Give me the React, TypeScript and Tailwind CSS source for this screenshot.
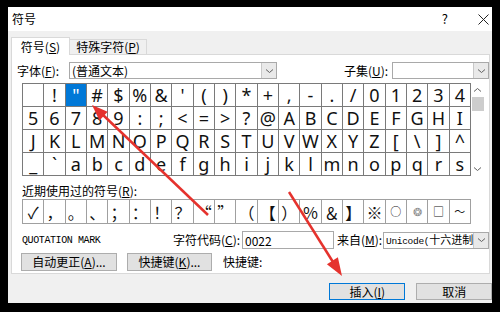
import React from 'react';

const ui = { fontFamily: '"Noto Sans CJK SC", "Noto Sans", sans-serif' };
const glyph = { fontFamily: '"Noto Sans", "Noto Sans CJK SC", sans-serif' };
const mono = { fontFamily: '"Liberation Mono", "Noto Sans CJK SC", monospace' };

const rows = [
  [' ', '!', '"', '#', '$', '%', '&', "'", '(', ')', '*', '+', ',', '-', '.', '/', '0', '1', '2', '3', '4'],
  ['5', '6', '7', '8', '9', ':', ';', '<', '=', '>', '?', '@', 'A', 'B', 'C', 'D', 'E', 'F', 'G', 'H', 'I'],
  ['J', 'K', 'L', 'M', 'N', 'O', 'P', 'Q', 'R', 'S', 'T', 'U', 'V', 'W', 'X', 'Y', 'Z', '[', '\\', ']', '^'],
  ['_', '`', 'a', 'b', 'c', 'd', 'e', 'f', 'g', 'h', 'i', 'j', 'k', 'l', 'm', 'n', 'o', 'p', 'q', 'r', 's'],
];

// 近期使用过的符号，small 表示字形较小
const recent: { c: string; small?: boolean; gray?: boolean }[] = [
  { c: '✓' }, { c: '，' }, { c: '。' }, { c: '、' }, { c: '；' }, { c: '：' }, { c: '！' },
  { c: '？' }, { c: '“' }, { c: '”' }, { c: '（' }, { c: '【' }, { c: '）' }, { c: '％' },
  { c: '＆' }, { c: '】' }, { c: '※' }, { c: '○', small: true }, { c: '❂', small: true, gray: true },
  { c: '□', small: true }, { c: '～', small: true },
];

function Chevron() {
  return (
    <svg width="9" height="6" viewBox="0 0 9 6">
      <path d="M1 1.5 L4.5 4.5 L8 1.5" fill="none" stroke="#606060" strokeWidth="1" />
    </svg>
  );
}

function Combo({ width, children }: { width: string; children?: React.ReactNode }) {
  return (
    <div className={`${width} h-[17px] border border-[#a9a9a9] bg-white flex items-center`}>
      <div className="flex-1 pl-[2px] text-[12px] leading-[15px] whitespace-nowrap overflow-hidden">{children}</div>
      <div className="w-[15px] h-full border-l border-[#c8c8c8] bg-[#e9e9e9] flex items-center justify-center">
        <Chevron />
      </div>
    </div>
  );
}

export default function App() {
  return (
    <div className="relative w-[500px] h-[312px] bg-black pl-[8px] pt-[7px] overflow-hidden" style={ui}>
      <div className="w-[484px] h-[296px] bg-[#f0f0f0] flex flex-col text-black">
        {/* 标题栏 */}
        <div className="h-[24px] bg-white flex items-center pl-[4px] text-[12px]">
          <span>符号</span>
          <span className="ml-auto text-[13px] mr-[30px]">?</span>
          <svg width="11" height="11" viewBox="0 0 11 11" className="mr-[3px]">
            <path d="M0.5 0.5 L10.5 10.5 M10.5 0.5 L0.5 10.5" stroke="#222" strokeWidth="1" />
          </svg>
        </div>

        {/* 选项卡 */}
        <div className="h-[23px] flex items-end pl-[3px]">
          <div className="relative z-10 w-[59px] h-[18px] -mb-px bg-white border border-b-0 border-[#d9d9d9] flex items-center justify-center text-[12px]">
            符号(<u>S</u>)
          </div>
          <div className="w-[77px] h-[15px] border-t border-r border-[#d9d9d9] bg-[#f0f0f0] flex items-center justify-center text-[12px]">
            特殊字符(<u>P</u>)
          </div>
        </div>

        {/* 选项卡内容 */}
        <div className="ml-[3px] w-[479px] h-[220px] border border-[#d9d9d9] bg-white flex flex-col">
          <div className="mt-[7px] h-[17px] flex items-center pl-[5px] text-[12px]">
            <span className="w-[52px]">字体(<u>F</u>):</span>
            <Combo width="w-[208px]">(普通文本)</Combo>
            <span className="ml-[67px] w-[48px]">子集(<u>U</u>):</span>
            <Combo width="w-[97px]" />
          </div>

          {/* 符号网格 */}
          <div className="mt-[4px] ml-[10px] flex">
            <div className="w-[449px] h-[93px] border-l border-t border-[#7a7a7a] grid grid-cols-[repeat(21,minmax(0,1fr))] grid-rows-4" style={glyph}>
              {rows.flat().map((c, i) => (
                <div
                  key={i}
                  className={`border-r border-b border-[#7a7a7a] flex items-center justify-center text-[18px] leading-none ${
                    i === 2 ? 'bg-[#0078d7] text-white' : 'bg-white text-[#111]'
                  }`}
                >
                  {c}
                </div>
              ))}
            </div>
            <div className="w-[13px] h-[93px] flex flex-col items-center">
              <div className="h-[14px] flex items-center justify-center rotate-180">
                <Chevron />
              </div>
              <div className="w-[12px] h-[14px] bg-[#cdcdcd]" />
              <div className="flex-1" />
              <div className="h-[14px] flex items-center justify-center">
                <Chevron />
              </div>
            </div>
          </div>

          <div className="mt-[8px] ml-[10px] h-[14px] text-[12px] leading-[14px]">
            近期使用过的符号(<u>R</u>):
          </div>
          <div className="mt-[1px] ml-[10px] w-[449px] h-[25px] border-l border-t border-[#a0a0a0] grid grid-cols-[repeat(21,minmax(0,1fr))]">
            {recent.map((r, i) => (
              <div
                key={i}
                className={`border-r border-b border-[#a0a0a0] flex items-center justify-center leading-none ${
                  r.small ? 'text-[11px]' : 'text-[16px]'
                } ${r.gray ? 'text-[#888]' : 'text-[#111]'}`}
              >
                {r.c}
              </div>
            ))}
          </div>

          <div className="mt-[7px] h-[18px] flex items-center text-[12px]">
            <span className="ml-[10px] w-[151px] text-[10px] tracking-[-0.4px]" style={mono}>QUOTATION MARK</span>
            <span className="w-[69px]">字符代码(<u>C</u>):</span>
            <div className="w-[92px] h-[18px] border border-[#a9a9a9] flex items-center pl-[2px] text-[12px] leading-[15px]">
              0022
            </div>
            <span className="ml-[3px] w-[46px]">来自(<u>M</u>):</span>
            <Combo width="w-[106px]">
              <span className="text-[9.5px] tracking-[-0.3px]" style={mono}>Unicode(</span>
              <span className="text-[11px]">十六进制</span>
            </Combo>
          </div>

          <div className="mt-[4px] ml-[9px] h-[18px] flex items-center text-[12px]">
            <button className="w-[96px] h-[18px] bg-[#e1e1e1] border border-[#adadad] flex items-center justify-center">
              自动更正(<u>A</u>)...
            </button>
            <button className="ml-[10px] w-[85px] h-[18px] bg-[#e1e1e1] border border-[#adadad] flex items-center justify-center">
              快捷键(<u>K</u>)...
            </button>
            <span className="ml-[11px]">快捷键:</span>
          </div>
        </div>

        {/* 底部按钮 */}
        <div className="mt-[9px] flex text-[12px]">
          <button className="ml-[321px] w-[79px] h-[17px] bg-[#e1e1e1] border border-[#0078d7] flex items-center justify-center">
            插入(<u>I</u>)
          </button>
          <button className="ml-[11px] w-[78px] h-[17px] bg-[#e1e1e1] border border-[#adadad] flex items-center justify-center">
            取消
          </button>
        </div>
      </div>

      {/* 标注箭头 */}
      <svg className="absolute left-0 top-0 pointer-events-none" width="500" height="312" viewBox="0 0 500 312">
        <line x1="208" y1="215" x2="102" y2="114" stroke="#e5322d" strokeWidth="2.5" />
        <polygon points="92,105 107.7,111.7 99.5,120.4" fill="#e5322d" />
        <line x1="289" y1="192" x2="333" y2="262" stroke="#e5322d" strokeWidth="2.5" />
        <polygon points="342,276 337.9,257.3 326.9,264.3" fill="#e5322d" />
      </svg>
    </div>
  );
}
